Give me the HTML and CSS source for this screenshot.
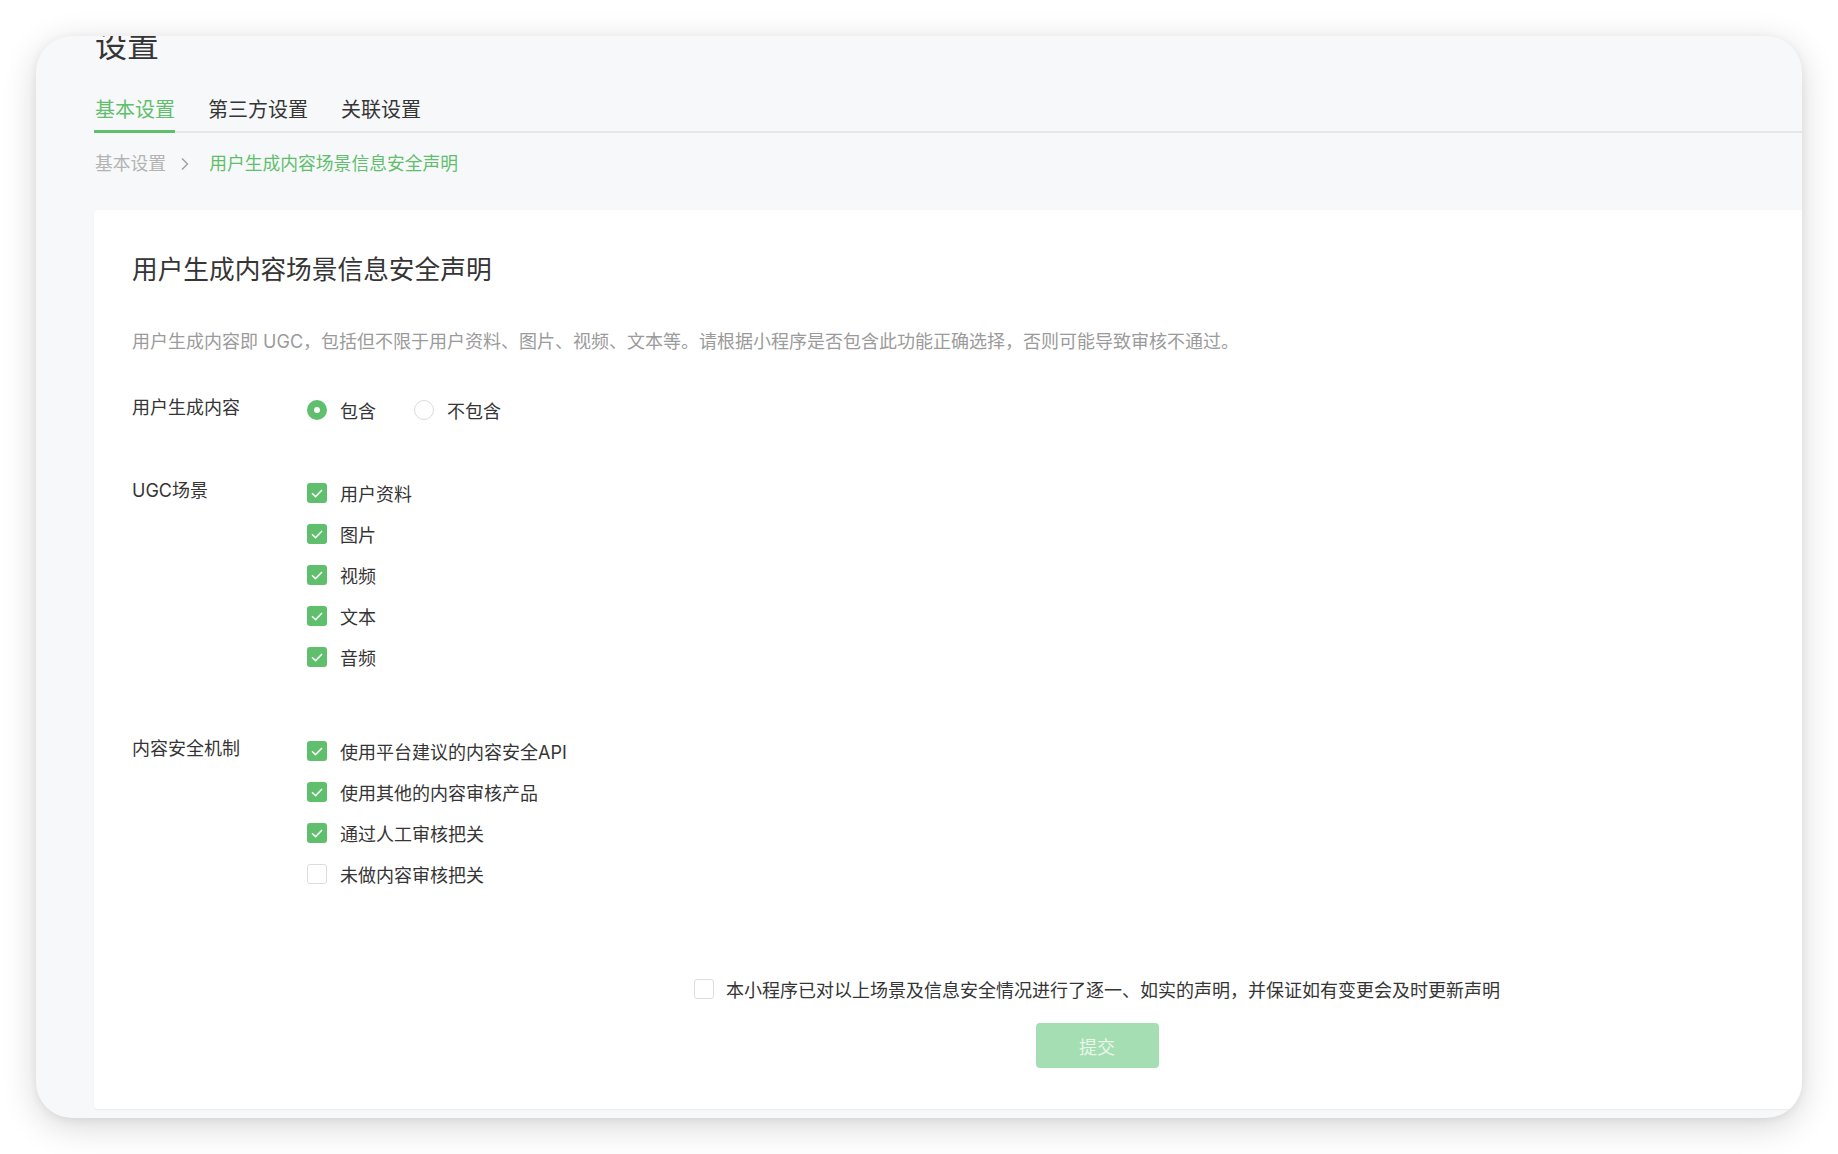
FILE: index.html
```html
<!DOCTYPE html>
<html lang="zh-CN">
<head>
<meta charset="utf-8">
<title>设置</title>
<link rel="stylesheet" href="styles.css">
</head>
<body>
<div class="window">
  <h1 class="page-title">设置</h1>
  <div class="tabs">
    <div class="tab active">基本设置</div>
    <div class="tab">第三方设置</div>
    <div class="tab">关联设置</div>
  </div>
  <div class="crumbs">
    <span class="crumb">基本设置</span>
    <svg class="chev" width="8" height="14" viewBox="0 0 8 14"><path d="M1 1.5 L6.5 7 L1 12.5" fill="none" stroke="#9c9c9c" stroke-width="1.3"/></svg>
    <span class="crumb current">用户生成内容场景信息安全声明</span>
  </div>
  <div class="card">
    <h2 class="card-title">用户生成内容场景信息安全声明</h2>
    <p class="desc">用户生成内容即 UGC，包括但不限于用户资料、图片、视频、文本等。请根据小程序是否包含此功能正确选择，否则可能导致审核不通过。</p>

    <div class="row row-radio">
      <div class="label">用户生成内容</div>
      <div class="options inline">
        <label class="opt"><span class="radio on"></span>包含</label>
        <label class="opt"><span class="radio"></span>不包含</label>
      </div>
    </div>

    <div class="row row-ugc">
      <div class="label">UGC场景</div>
      <div class="options">
        <label class="opt"><span class="cb on"><svg width="20" height="20" viewBox="0 0 20 20"><path d="M5 10.2 L8.6 13.6 L15 7" fill="none" stroke="#fff" stroke-width="1.5"/></svg></span>用户资料</label>
        <label class="opt"><span class="cb on"><svg width="20" height="20" viewBox="0 0 20 20"><path d="M5 10.2 L8.6 13.6 L15 7" fill="none" stroke="#fff" stroke-width="1.5"/></svg></span>图片</label>
        <label class="opt"><span class="cb on"><svg width="20" height="20" viewBox="0 0 20 20"><path d="M5 10.2 L8.6 13.6 L15 7" fill="none" stroke="#fff" stroke-width="1.5"/></svg></span>视频</label>
        <label class="opt"><span class="cb on"><svg width="20" height="20" viewBox="0 0 20 20"><path d="M5 10.2 L8.6 13.6 L15 7" fill="none" stroke="#fff" stroke-width="1.5"/></svg></span>文本</label>
        <label class="opt"><span class="cb on"><svg width="20" height="20" viewBox="0 0 20 20"><path d="M5 10.2 L8.6 13.6 L15 7" fill="none" stroke="#fff" stroke-width="1.5"/></svg></span>音频</label>
      </div>
    </div>

    <div class="row row-sec">
      <div class="label">内容安全机制</div>
      <div class="options">
        <label class="opt"><span class="cb on"><svg width="20" height="20" viewBox="0 0 20 20"><path d="M5 10.2 L8.6 13.6 L15 7" fill="none" stroke="#fff" stroke-width="1.5"/></svg></span>使用平台建议的内容安全API</label>
        <label class="opt"><span class="cb on"><svg width="20" height="20" viewBox="0 0 20 20"><path d="M5 10.2 L8.6 13.6 L15 7" fill="none" stroke="#fff" stroke-width="1.5"/></svg></span>使用其他的内容审核产品</label>
        <label class="opt"><span class="cb on"><svg width="20" height="20" viewBox="0 0 20 20"><path d="M5 10.2 L8.6 13.6 L15 7" fill="none" stroke="#fff" stroke-width="1.5"/></svg></span>通过人工审核把关</label>
        <label class="opt"><span class="cb"></span>未做内容审核把关</label>
      </div>
    </div>

    <div class="footer">
      <label class="opt agree"><span class="cb"></span>本小程序已对以上场景及信息安全情况进行了逐一、如实的声明，并保证如有变更会及时更新声明</label>
      <button class="submit" type="button">提交</button>
    </div>
  </div>
</div>
</body>
</html>
```
FILE: styles.css
```css
html, body {
  margin: 0;
  padding: 0;
  background: #ffffff;
}
body {
  font-family: "Inter", "Noto Sans CJK SC", sans-serif;
  color: #353535;
  padding: 36px 0 0 36px;
  height: 1154px;
  box-sizing: border-box;
  overflow: hidden;
}
.window {
  width: 1766px;
  height: 1082px;
  box-sizing: border-box;
  background: #f7f8fa;
  border-radius: 36px;
  overflow: hidden;
  padding-left: 58px;
  box-shadow: 0 8px 34px rgba(0, 0, 0, 0.16), 0 2px 8px rgba(0, 0, 0, 0.06);
}
.page-title {
  margin: -6px 0 0 1px;
  font-size: 32px;
  line-height: 32px;
  font-weight: 400;
  color: #353535;
}
.tabs {
  display: flex;
  gap: 33px;
  margin-top: 34px;
  border-bottom: 2px solid #e6e7ea;
}
.tab {
  font-size: 20px;
  line-height: 28px;
  padding: 0 0 6px;
  margin-bottom: -2px;
  border-bottom: 3px solid transparent;
  color: #353535;
}
.tab:first-child {
  padding-left: 1px;
}
.tab.active {
  color: #5fbf6c;
  border-bottom-color: #5fbf6c;
}
.crumbs {
  display: flex;
  align-items: center;
  margin-top: 18px;
  padding-left: 1px;
  font-size: 17.8px;
  line-height: 26px;
}
.crumb {
  color: #b3b3b3;
}
.crumb.current {
  color: #5fbf6c;
}
.chev {
  margin: 0 20px 0 15px;
}
.card {
  margin-top: 33px;
  width: 2006px;
  height: 899px;
  box-sizing: border-box;
  background: #ffffff;
  border-radius: 4px;
  box-shadow: 0 1px 2px rgba(0, 0, 0, 0.06);
  padding: 42px 38px 40px;
}
.card-title {
  margin: 0;
  font-size: 25.7px;
  line-height: 36px;
  font-weight: 400;
  color: #353535;
}
.desc {
  margin: 41px 0 0;
  font-size: 18px;
  line-height: 26px;
  color: #9b9b9b;
}
.row {
  display: flex;
  align-items: flex-start;
  font-size: 18px;
}
.row-radio {
  margin-top: 34px;
}
.row-ugc {
  margin-top: 42px;
}
.row-sec {
  margin-top: 53px;
}
.label {
  width: 175px;
  flex: none;
  line-height: 37px;
  color: #353535;
}
.options {
  display: flex;
  flex-direction: column;
}
.options.inline {
  flex-direction: row;
  gap: 38px;
}
.opt {
  display: flex;
  align-items: center;
  height: 41px;
  gap: 13px;
  font-size: 18px;
  color: #353535;
  white-space: nowrap;
}
.radio {
  width: 20px;
  height: 20px;
  box-sizing: border-box;
  border: 1px solid #dcdcdc;
  border-radius: 50%;
  background: #fff;
  display: flex;
  align-items: center;
  justify-content: center;
  flex: none;
}
.radio.on {
  border: none;
  background: #5fbf6c;
}
.radio.on::after {
  content: "";
  width: 6px;
  height: 6px;
  border-radius: 50%;
  background: #fff;
}
.cb {
  width: 20px;
  height: 20px;
  box-sizing: border-box;
  border: 1px solid #dddddd;
  border-radius: 3px;
  background: #fff;
  flex: none;
  display: flex;
}
.cb.on {
  border: none;
  background: #5fbf6c;
}
.footer {
  margin-top: 74px;
  display: flex;
  flex-direction: column;
  align-items: center;
}
.agree {
  gap: 12px;
}
.submit {
  margin-top: 14px;
  width: 123px;
  height: 45px;
  border: none;
  border-radius: 4px;
  background: #a6deb3;
  color: #e9f7ec;
  font-family: "Inter", "Noto Sans CJK SC", sans-serif;
  font-size: 18px;
  padding: 0;
}
```
